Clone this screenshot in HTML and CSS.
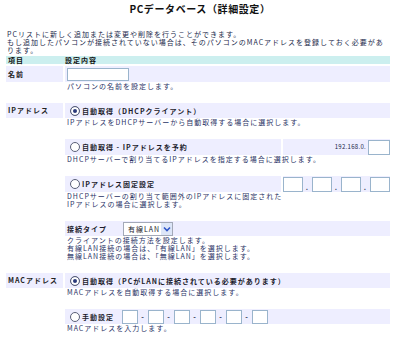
FILE: index.html
```html
<!DOCTYPE html>
<html lang="ja">
<head>
  <meta charset="UTF-8">
  <title>PCデータベース（詳細設定）</title>
  <link rel="stylesheet" href="styles.css">
</head>
<body>

  <h1 class="title">PCデータベース（詳細設定）</h1>

  <div class="page">
    <p class="intro">
      PCリストに新しく追加または変更や削除を行うことができます。<br>
      もし追加したパソコンが接続されていない場合は、そのパソコンのMACアドレスを登録しておく必要があ<br>
      ります。
    </p>

    <div class="head-row">
      <span>項目</span>
      <span>設定内容</span>
    </div>

    <!-- 名前 -->
    <div class="item">
      <div class="label tall">名前</div>
      <div class="body">
        <div class="group">
          <div class="bar tall"><input type="text" class="txt name-box"></div>
          <p class="note">パソコンの名前を設定します。</p>
        </div>
      </div>
    </div>

    <!-- IPアドレス -->
    <div class="item">
      <div class="label">IPアドレス</div>
      <div class="body">
        <div class="group">
          <div class="bar">
            <label class="opt"><input type="radio" name="ip" checked>自動取得（DHCPクライアント）</label>
          </div>
          <p class="note">IPアドレスをDHCPサーバーから自動取得する場合に選択します。</p>
        </div>

        <div class="group">
          <div class="split">
            <div class="bar tall">
              <label class="opt"><input type="radio" name="ip">自動取得 - IPアドレスを予約</label>
            </div>
            <div class="bar tall side right">
              <span class="prefix">192.168.0.</span><input type="text" class="txt ip-box">
            </div>
          </div>
          <p class="note">DHCPサーバーで割り当てるIPアドレスを指定する場合に選択します。</p>
        </div>

        <div class="group">
          <div class="split">
            <div class="bar tall">
              <label class="opt"><input type="radio" name="ip">IPアドレス固定設定</label>
            </div>
            <div class="bar tall side">
              <input type="text" class="txt oct"><span class="dot">.</span>
              <input type="text" class="txt oct"><span class="dot">.</span>
              <input type="text" class="txt oct"><span class="dot">.</span>
              <input type="text" class="txt oct">
            </div>
          </div>
          <p class="note">DHCPサーバーの割り当て範囲外のIPアドレスに固定された<br>IPアドレスの場合に選択します。</p>
        </div>

        <div class="group">
          <div class="bar">
            <span class="conn-label">接続タイプ</span>
            <div class="fake-select">
              <span class="sel-text">有線LAN</span>
              <span class="sel-arrow">
                <svg width="8" height="6" viewBox="0 0 8 6"><path d="M1 1.5 L4 4.5 L7 1.5" fill="none" stroke="#2f55c8" stroke-width="1.6"/></svg>
              </span>
            </div>
          </div>
          <p class="note">クライアントの接続方法を設定します。<br>有線LAN接続の場合は、「有線LAN」を選択します。<br>無線LAN接続の場合は、「無線LAN」を選択します。</p>
        </div>
      </div>
    </div>

    <!-- MACアドレス -->
    <div class="item">
      <div class="label">MACアドレス</div>
      <div class="body">
        <div class="group">
          <div class="bar">
            <label class="opt"><input type="radio" name="mac" checked>自動取得（PCがLANに接続されている必要があります）</label>
          </div>
          <p class="note">MACアドレスを自動取得する場合に選択します。</p>
        </div>

        <div class="group">
          <div class="bar">
            <label class="opt"><input type="radio" name="mac">手動設定</label>
            <div class="mac-boxes">
              <input type="text" class="txt mac"><span class="dash">-</span>
              <input type="text" class="txt mac"><span class="dash">-</span>
              <input type="text" class="txt mac"><span class="dash">-</span>
              <input type="text" class="txt mac"><span class="dash">-</span>
              <input type="text" class="txt mac"><span class="dash">-</span>
              <input type="text" class="txt mac">
            </div>
          </div>
          <p class="note">MACアドレスを入力します。</p>
        </div>
      </div>
    </div>
  </div>

</body>
</html>
```

FILE: styles.css
```css
body {
  margin: 0;
  font-family: "Noto Sans CJK JP", "Noto Sans", sans-serif;
  color: #22294a;
  background: #fff;
}
.title {
  margin: 3px 0 0;
  font-size: 10px;
  line-height: 12px;
  font-weight: 700;
  text-align: center;
  color: #111;
  letter-spacing: 0.6px;
}
.page {
  width: 384px;
  margin-left: 6px;
}
.intro {
  margin: 15px 0 0 1px;
  font-size: 7px;
  line-height: 8px;
  letter-spacing: 1px;
  color: #22294a;
}
.head-row {
  display: grid;
  grid-template-columns: 59px 1fr;
  margin: 2px 0;
  height: 8px;
  background: #ccefef;
  font-size: 7px;
  line-height: 8px;
  font-weight: 700;
  letter-spacing: 1px;
  color: #111;
}
.head-row span:first-child {
  padding-left: 2px;
}
.item {
  display: grid;
  grid-template-columns: 57px 1fr;
  column-gap: 2px;
}
.label {
  height: 15px;
  background: #eeeeff;
  padding-left: 2px;
  font-size: 7px;
  line-height: 15px;
  font-weight: 700;
  letter-spacing: 1px;
  color: #222;
}
.group {
  margin-bottom: 13px;
}
.bar {
  display: flex;
  align-items: center;
  height: 15px;
  padding-left: 2px;
  background: #eeeeff;
  font-size: 7px;
  letter-spacing: 1px;
}
.tall {
  height: 16px;
  line-height: 16px;
}
.split {
  display: grid;
  grid-template-columns: 1fr 107px;
  column-gap: 2px;
}
.side {
  padding-left: 0;
}
.right {
  justify-content: flex-end;
}
.note {
  margin: 0 0 0 2px;
  font-size: 7px;
  line-height: 8px;
  letter-spacing: 1px;
  color: #2a3366;
}
.opt {
  display: flex;
  align-items: center;
  font-weight: 700;
  color: #1c1c2c;
}
.opt input[type="radio"] {
  appearance: none;
  width: 10px;
  height: 10px;
  margin: 0 2px 0 3px;
  border: 1px solid #5a6078;
  border-radius: 50%;
  background: #fff;
}
.opt input[type="radio"]:checked {
  background: #2b3a7a;
  box-shadow: inset 0 0 0 2px #fff;
}
.txt {
  box-sizing: border-box;
  margin: 0;
  padding: 0;
  border: 1px solid #9ab4cc;
  background: #fff;
  height: 14px;
}
.name-box {
  width: 62px;
  height: 13px;
}
.prefix {
  font-size: 6px;
  letter-spacing: 0.3px;
  margin-right: 2px;
}
.ip-box {
  width: 22px;
  height: 15px;
}
.oct {
  width: 20px;
  height: 15px;
}
.dot {
  width: 9px;
  text-align: center;
  font-weight: 700;
  align-self: flex-end;
  line-height: 10px;
}
.conn-label {
  font-weight: 700;
  color: #1c1c2c;
  width: 56px;
}
.fake-select {
  display: flex;
  align-items: center;
  box-sizing: border-box;
  width: 50px;
  height: 14px;
  border: 1px solid #a3a9b8;
  background: #fff;
}
.sel-text {
  flex: 1;
  padding-left: 4px;
  color: #1c1c2c;
}
.sel-arrow {
  display: flex;
  align-items: center;
  justify-content: center;
  width: 11px;
  height: 12px;
  background: #dde6f8;
}
.mac-boxes {
  display: flex;
  align-items: center;
  margin-left: 8px;
}
.mac {
  width: 16px;
  height: 14px;
}
.dash {
  width: 10px;
  text-align: center;
  font-weight: 700;
}
```
